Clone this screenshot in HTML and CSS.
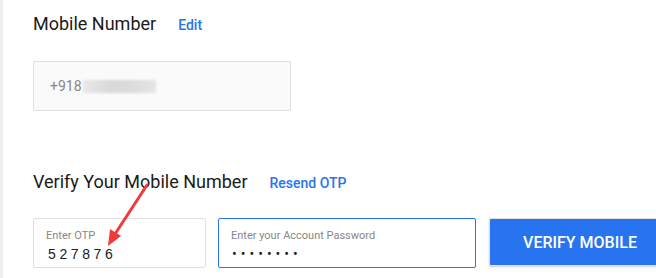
FILE: index.html
```html
<!DOCTYPE html>
<html lang="en">
<head>
    <meta charset="UTF-8">
    <meta name="viewport" content="width=device-width, initial-scale=1.0">
    <title>Mobile Number</title>
    <link rel="stylesheet" href="styles.css">
</head>
<body>

<div class="page">
    <div class="section">
        <div class="section-head">
            <span class="section-title">Mobile Number</span>
            <a class="link" href="#">Edit</a>
        </div>
        <div class="readonly-field">
            <span>+918</span><span class="masked"></span>
        </div>
    </div>

    <div class="section verify">
        <div class="section-head">
            <span class="section-title">Verify Your Mobile Number</span>
            <a class="link" href="#">Resend OTP</a>
        </div>
        <div class="verify-row">
            <div class="field otp">
                <label>Enter OTP</label>
                <div class="value digits">527876</div>
            </div>
            <div class="field password focused">
                <label>Enter your Account Password</label>
                <div class="value dots">&bull;&bull;&bull;&bull;&bull;&bull;&bull;&bull;</div>
            </div>
            <button class="verify-btn">VERIFY MOBILE</button>
        </div>
    </div>

    <svg class="arrow" width="60" height="90" viewBox="0 0 60 90">
        <line x1="47" y1="4" x2="15" y2="53" stroke="#ef3b3b" stroke-width="3" stroke-linecap="round"/>
        <polygon points="8,65 10,48 21,55" fill="#ef3b3b"/>
    </svg>
</div>

</body>
</html>
```

FILE: styles.css
```css
body {
    margin: 0;
    font-family: Roboto, Arial, sans-serif;
    background: #fff;
    color: #212121;
}
.page {
    position: relative;
    height: 278px;
    border-left: 3px solid #efeff3;
    padding: 10px 0 0 30px;
    overflow: hidden;
}
.section-head {
    display: flex;
    align-items: baseline;
    gap: 22px;
    height: 28px;
}
.section-title {
    font-size: 18px;
    font-weight: 400;
    line-height: 28px;
    color: #1a1a1a;
}
.link {
    font-size: 14px;
    font-weight: 500;
    color: #2874f0;
    text-decoration: none;
}
.readonly-field {
    display: flex;
    align-items: center;
    width: 240px;
    height: 48px;
    margin-top: 23px;
    padding-left: 16px;
    border: 1px solid #e0e0e0;
    border-radius: 2px;
    background: #fafafa;
    font-size: 14px;
    color: #878787;
}
.masked {
    width: 73px;
    height: 13px;
    margin-left: 1px;
    background: linear-gradient(90deg, #e8e8e8, #d9d9d9 40%, #dcdcdc 70%, #e6e6e6);
    filter: blur(1px);
}
.verify {
    margin-top: 57px;
}
.verify-row {
    display: flex;
    align-items: flex-start;
    margin-top: 22px;
}
.field {
    box-sizing: border-box;
    flex-shrink: 0;
    height: 50px;
    padding: 10px 12px 0;
    border: 1px solid #e0e0e0;
    border-radius: 2px;
}
.field label {
    display: block;
    font-size: 11px;
    color: #878787;
    line-height: 13px;
}
.field .value {
    margin-top: 4px;
    font-size: 14px;
    line-height: 16px;
    color: #212121;
}
.otp {
    width: 173px;
    margin-right: 12px;
}
.digits {
    font-family: "Liberation Sans", Arial, sans-serif;
    letter-spacing: 3.6px;
    padding-left: 2px;
}
.password {
    width: 258px;
}
.focused {
    border-color: #2874f0;
}
.dots {
    letter-spacing: 4px;
    padding-left: 1px;
}
.verify-btn {
    flex-shrink: 0;
    width: 182px;
    height: 48px;
    margin-left: 13px;
    border: 1px solid #e0e0e0;
    border-radius: 2px;
    background: #2874f0;
    color: #fff;
    font-family: Roboto, Arial, sans-serif;
    font-size: 16px;
    font-weight: 500;
    box-shadow: 0 1px 2px rgba(0, 0, 0, 0.2);
}
.arrow {
    position: absolute;
    left: 97px;
    top: 181px;
}
```
